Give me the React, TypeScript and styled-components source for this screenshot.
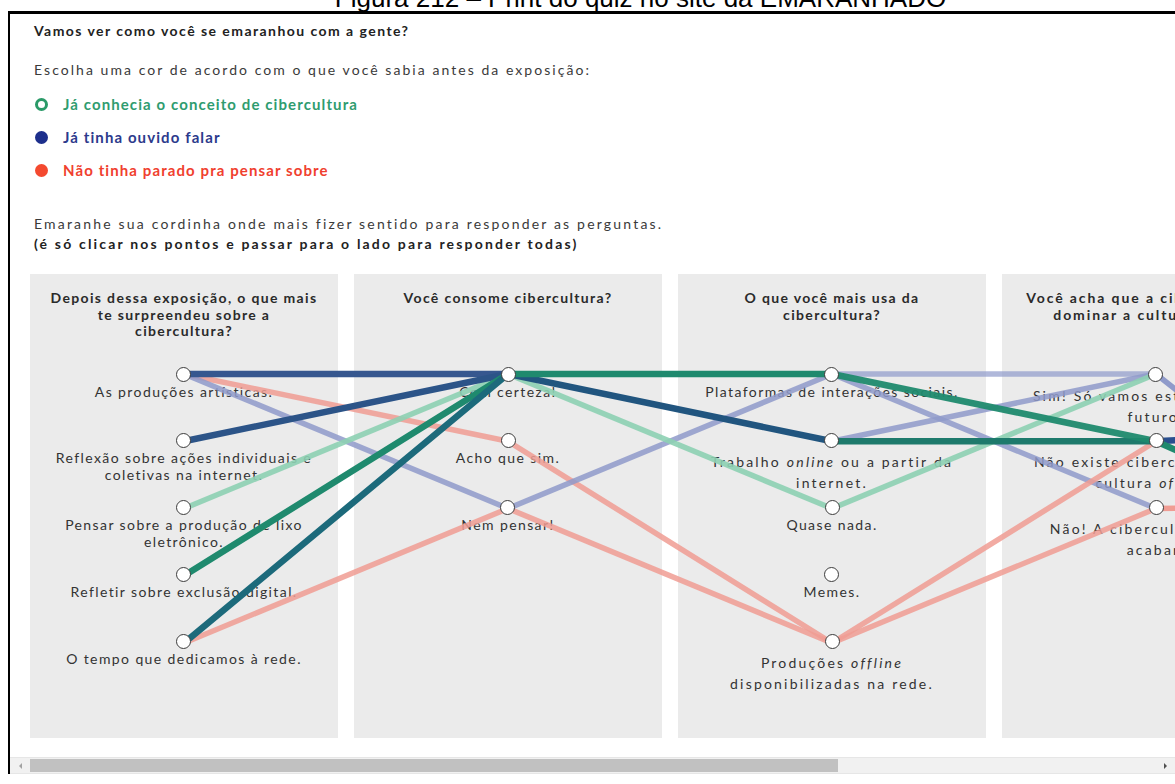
import React from 'react';
import styled, { createGlobalStyle } from 'styled-components';

const GlobalStyle = createGlobalStyle`
  html, body {
    margin: 0;
    padding: 0;
    background: #ffffff;
    overflow: hidden;
  }
  body {
    font-family: Lato, "Noto Sans", sans-serif;
    color: #333333;
  }
`;

const COL_WIDTH = 308;
const COL_GAP = 16;
const HEADER_OFFSET = 93;
const ROW_PITCH = 67.25;
const NODE_SIZE = 15;

const Page = styled.div`
  width: 1175px;
  height: 784px;
  overflow: hidden;
`;

const Caption = styled.div`
  height: 11px;
  overflow: hidden;
  display: flex;
  justify-content: center;
  padding-left: 106px;
`;

const CaptionText = styled.span`
  display: block;
  margin-top: -14px;
  font-family: "Liberation Sans", Arial, sans-serif;
  font-size: 26px;
  line-height: 24px;
  color: #000000;
  white-space: nowrap;
`;

const Frame = styled.div`
  margin-left: 8px;
  width: 1400px;
  border-top: 3px solid #000000;
  border-left: 2px solid #000000;
  padding: 8px 0 0 20px;
`;

const Intro = styled.div`
  padding-left: 4px;
`;

const Title = styled.div`
  font-size: 14px;
  font-weight: 700;
  line-height: 18px;
  letter-spacing: 1.45px;
  color: #222222;
`;

const Prompt = styled.div`
  margin-top: 21px;
  font-size: 14px;
  line-height: 18px;
  letter-spacing: 2.05px;
  color: #3a3a3a;
`;

const Legend = styled.ul`
  list-style: none;
  margin: 16px 0 0;
  padding: 0;
  display: flex;
  flex-direction: column;
  gap: 15px;
`;

const LegendItem = styled.li<{ $color: string }>`
  display: flex;
  align-items: center;
  gap: 15px;
  height: 18px;
  font-size: 15px;
  font-weight: 700;
  letter-spacing: 1.1px;
  color: ${p => p.$color};
`;

const Swatch = styled.span<{ $color: string; $ring?: boolean }>`
  width: 13px;
  height: 13px;
  margin-left: 1px;
  border-radius: 50%;
  box-sizing: border-box;
  flex-shrink: 0;
  background: ${p => (p.$ring ? 'transparent' : p.$color)};
  border: ${p => (p.$ring ? `3px solid ${p.$color}` : 'none')};
`;

const Instructions = styled.div`
  margin-top: 35px;
  font-size: 14px;
  line-height: 20px;
  letter-spacing: 2.18px;
  color: #3a3a3a;
`;

const Hint = styled.div`
  font-weight: 700;
  letter-spacing: 2.18px;
  color: #222222;
`;

const Board = styled.div`
  position: relative;
  margin-top: 20px;
  display: flex;
  gap: ${COL_GAP}px;
  height: 464px;
`;

const Column = styled.section`
  width: ${COL_WIDTH}px;
  flex-shrink: 0;
  background: #ebebeb;
  padding-top: 16px;
  box-sizing: border-box;
  display: flex;
  flex-direction: column;
  align-items: center;
`;

const Question = styled.h3<{ $wide?: boolean }>`
  margin: 0;
  height: ${HEADER_OFFSET - 16}px;
  font-size: 14px;
  font-weight: 700;
  line-height: 16.5px;
  letter-spacing: ${p => (p.$wide ? '1.9px' : '1.35px')};
  text-align: center;
  color: #2a2a2a;
  white-space: nowrap;
`;

const Option = styled.div`
  height: ${ROW_PITCH}px;
  display: flex;
  flex-direction: column;
  align-items: center;
  margin-top: -0.5px;
`;

const Node = styled.span`
  position: relative;
  z-index: 2;
  width: ${NODE_SIZE}px;
  height: ${NODE_SIZE}px;
  box-sizing: border-box;
  border-radius: 50%;
  border: 1.4px solid #3c3c3c;
  background: #ffffff;
  flex-shrink: 0;
`;

const Label = styled.div<{ $wide?: boolean }>`
  margin-top: ${p => (p.$wide ? '3px' : '1px')};
  font-size: 14px;
  line-height: ${p => (p.$wide ? '21px' : '17px')};
  letter-spacing: ${p => (p.$wide ? '2.2px' : '1.4px')};
  text-align: center;
  color: #333333;
  white-space: nowrap;
`;

const Strings = styled.svg`
  position: absolute;
  left: 0;
  top: 0;
  z-index: 1;
  pointer-events: none;
  overflow: visible;
`;

const Scrollbar = styled.div`
  margin: 19px 0 0 -20px;
  width: 1165px;
  height: 15px;
  display: flex;
  align-items: center;
  background: #f1f1f1;
  border-top: 1px solid #e6e6e6;
  border-bottom: 1px solid #e6e6e6;
`;

const Arrow = styled.span<{ $dir: 'left' | 'right' }>`
  width: 20px;
  display: flex;
  justify-content: center;
  &::before {
    content: '';
    border-top: 3px solid transparent;
    border-bottom: 3px solid transparent;
    ${p =>
      p.$dir === 'left'
        ? 'border-right: 3px solid #a3a3a3;'
        : 'border-left: 3px solid #505050;'}
  }
`;

const Thumb = styled.div`
  width: 808px;
  height: 13px;
  background: #c1c1c1;
`;

const Track = styled.div`
  flex: 1;
`;

type Q = {
  title: React.ReactNode;
  wide?: boolean;
  options: { label: React.ReactNode; wide?: boolean }[];
};

const questions: Q[] = [
  {
    title: (
      <>
        Depois dessa exposição, o que mais
        <br />
        te surpreendeu sobre a
        <br />
        cibercultura?
      </>
    ),
    options: [
      { label: 'As produções artísticas.' },
      {
        label: (
          <>
            Reflexão sobre ações individuais e
            <br />
            coletivas na internet.
          </>
        ),
      },
      {
        label: (
          <>
            Pensar sobre a produção de lixo
            <br />
            eletrônico.
          </>
        ),
      },
      { label: 'Refletir sobre exclusão digital.' },
      { label: 'O tempo que dedicamos à rede.' },
    ],
  },
  {
    title: 'Você consome cibercultura?',
    options: [{ label: 'Com certeza!' }, { label: 'Acho que sim.' }, { label: 'Nem pensar!' }],
  },
  {
    title: (
      <>
        O que você mais usa da
        <br />
        cibercultura?
      </>
    ),
    options: [
      { label: 'Plataformas de interações sociais.' },
      {
        wide: true,
        label: (
          <>
            Trabalho <em>online</em> ou a partir da
            <br />
            internet.
          </>
        ),
      },
      { label: 'Quase nada.' },
      { label: 'Memes.' },
      {
        wide: true,
        label: (
          <>
            Produções <em>offline</em>
            <br />
            disponibilizadas na rede.
          </>
        ),
      },
    ],
  },
  {
    wide: true,
    title: (
      <>
        Você acha que a cibercultura vai
        <br />
        dominar a cultura <em>offline</em>?
      </>
    ),
    options: [
      {
        wide: true,
        label: (
          <>
            Sim! Só vamos estar online no
            <br />
            futuro.
          </>
        ),
      },
      {
        wide: true,
        label: (
          <>
            Não existe cibercultura sem a
            <br />
            cultura <em>offline</em>.
          </>
        ),
      },
      {
        wide: true,
        label: (
          <>
            Não! A cibercultura vai se
            <br />
            acabar.
          </>
        ),
      },
    ],
  },
];

const cx = (col: number) => col * (COL_WIDTH + COL_GAP) + COL_WIDTH / 2;
const cy = (row: number) => HEADER_OFFSET + 7 + row * ROW_PITCH;

const C = {
  blue: '#36578f',
  deepBlue: '#2c5488',
  navy: '#21557f',
  lavender: '#8f9aca',
  salmon: '#f09c93',
  mint: '#8dd0b3',
  green: '#1f8a6e',
  darkTeal: '#1c6a7b',
  teal: '#1e7a6c',
};

// [fromCol, fromRow, toRow, colour, width, opacity]
type Seg = [number, number, number, string, number, number];

const segments: Seg[] = [
  [0, 0, 1, C.salmon, 5.5, 0.85],
  [0, 0, 2, C.lavender, 5.5, 0.85],
  [0, 4, 2, C.salmon, 5.5, 0.85],
  [0, 2, 0, C.mint, 5.5, 0.9],
  [1, 1, 4, C.salmon, 5.5, 0.85],
  [1, 2, 4, C.salmon, 5.5, 0.85],
  [1, 2, 0, C.lavender, 5.5, 0.85],
  [1, 0, 2, C.mint, 5.5, 0.9],
  [2, 0, 0, C.lavender, 5.5, 0.7],
  [2, 0, 2, C.lavender, 5.5, 0.85],
  [2, 1, 0, C.lavender, 5.5, 0.85],
  [2, 2, 0, C.mint, 5.5, 0.9],
  [2, 4, 1, C.salmon, 5.5, 0.85],
  [2, 4, 2, C.salmon, 5.5, 0.85],
  [0, 0, 0, C.blue, 6.5, 1],
  [0, 1, 0, C.deepBlue, 6.5, 1],
  [0, 3, 0, C.green, 6.5, 1],
  [0, 4, 0, C.darkTeal, 6.5, 1],
  [1, 0, 1, C.navy, 6.5, 1],
  [1, 0, 0, C.green, 6.5, 1],
  [2, 1, 1, C.teal, 6.5, 1],
  [2, 0, 1, C.green, 6.5, 0.95],
];

// short strands heading to the next (off-screen) question
const stubs: [number, number, number, string, number][] = [
  [0, 280, 220, C.lavender, 5.5],
  [1, 280, -15, '#2a4f8f', 6.5],
  [1, 280, 125, C.green, 6.5],
  [2, 280, -5, C.salmon, 5.5],
];

function StringLayer() {
  const width = questions.length * (COL_WIDTH + COL_GAP);
  return (
    <Strings width={width} height={464} viewBox={`0 0 ${width} 464`}>
      {stubs.map(([row, dx, dy, color, w], i) => (
        <line
          key={`s${i}`}
          x1={cx(3)}
          y1={cy(row)}
          x2={cx(3) + dx}
          y2={cy(row) + dy}
          stroke={color}
          strokeWidth={w}
          strokeLinecap="round"
        />
      ))}
      {segments.map(([col, from, to, color, w, op], i) => (
        <line
          key={i}
          x1={cx(col)}
          y1={cy(from)}
          x2={cx(col + 1)}
          y2={cy(to)}
          stroke={color}
          strokeWidth={w}
          strokeOpacity={op}
          strokeLinecap="round"
        />
      ))}
    </Strings>
  );
}

export default function App() {
  return (
    <Page>
      <GlobalStyle />
      <Caption>
        <CaptionText>Figura 212 – Print do quiz no site da EMARANHADO</CaptionText>
      </Caption>
      <Frame>
        <Intro>
          <Title>Vamos ver como você se emaranhou com a gente?</Title>
          <Prompt>Escolha uma cor de acordo com o que você sabia antes da exposição:</Prompt>
          <Legend>
            <LegendItem $color="#2f9c6f">
              <Swatch $color="#2a9a68" $ring />
              Já conhecia o conceito de cibercultura
            </LegendItem>
            <LegendItem $color="#2c3a8c">
              <Swatch $color="#1d2f8c" />
              Já tinha ouvido falar
            </LegendItem>
            <LegendItem $color="#f0402e">
              <Swatch $color="#f4492f" />
              Não tinha parado pra pensar sobre
            </LegendItem>
          </Legend>
          <Instructions>
            Emaranhe sua cordinha onde mais fizer sentido para responder as perguntas.
            <Hint>(é só clicar nos pontos e passar para o lado para responder todas)</Hint>
          </Instructions>
        </Intro>
        <Board>
          {questions.map((q, i) => (
            <Column key={i}>
              <Question $wide={q.wide}>{q.title}</Question>
              {q.options.map((o, j) => (
                <Option key={j}>
                  <Node />
                  <Label $wide={o.wide}>{o.label}</Label>
                </Option>
              ))}
            </Column>
          ))}
          <StringLayer />
        </Board>
        <Scrollbar>
          <Arrow $dir="left" />
          <Thumb />
          <Track />
          <Arrow $dir="right" />
        </Scrollbar>
      </Frame>
    </Page>
  );
}
